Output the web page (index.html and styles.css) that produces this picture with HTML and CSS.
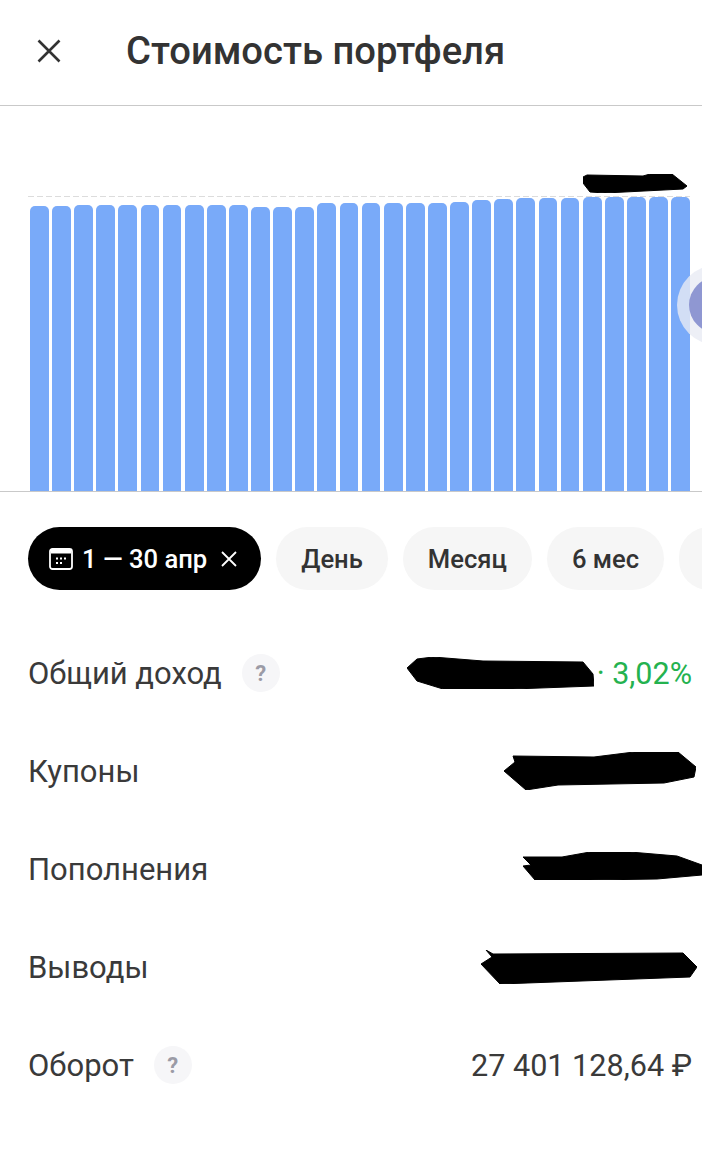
FILE: index.html
```html
<!DOCTYPE html>
<html lang="ru">
<head>
    <meta charset="UTF-8" />
    <meta name="viewport" content="width=device-width, initial-scale=1.0" />
    <title>Стоимость портфеля</title>
    <link rel="stylesheet" href="styles.css">
</head>
<body>
<header class="topbar">
    <svg class="close-icon" viewBox="0 0 24 24"><path d="M1.500 1.500L22.500 22.500M22.500 1.500L1.500 22.500"/></svg>
    <h1>Стоимость портфеля</h1>
</header>

<section class="chart">
    <svg class="scribble scribble-top" viewBox="0 0 104 19"><path d="M0 3L4 1L60 2L67 0L89 0L104 12L100 15L22 19L7 18L0 9Z"/></svg>
    <div class="chart-line"></div>
    <div class="bars">
        <div class="bar" style="height:285px"></div>
        <div class="bar" style="height:285px"></div>
        <div class="bar" style="height:286px"></div>
        <div class="bar" style="height:286px"></div>
        <div class="bar" style="height:286px"></div>
        <div class="bar" style="height:286px"></div>
        <div class="bar" style="height:286px"></div>
        <div class="bar" style="height:286px"></div>
        <div class="bar" style="height:286px"></div>
        <div class="bar" style="height:286px"></div>
        <div class="bar" style="height:284px"></div>
        <div class="bar" style="height:284px"></div>
        <div class="bar" style="height:284px"></div>
        <div class="bar" style="height:288px"></div>
        <div class="bar" style="height:288px"></div>
        <div class="bar" style="height:288px"></div>
        <div class="bar" style="height:288px"></div>
        <div class="bar" style="height:288px"></div>
        <div class="bar" style="height:288px"></div>
        <div class="bar" style="height:289px"></div>
        <div class="bar" style="height:291px"></div>
        <div class="bar" style="height:292px"></div>
        <div class="bar" style="height:293px"></div>
        <div class="bar" style="height:293px"></div>
        <div class="bar" style="height:293px"></div>
        <div class="bar" style="height:294px"></div>
        <div class="bar" style="height:294px"></div>
        <div class="bar" style="height:294px"></div>
        <div class="bar" style="height:294px"></div>
        <div class="bar" style="height:294px"></div>
    </div>
    <div class="thumb"></div>
</section>

<nav class="chips">
    <div class="chip chip-active">
        <svg class="cal-icon" viewBox="0 0 24 22">
            <rect x="1" y="1" width="22" height="20" rx="2.500" fill="none" stroke="#fff" stroke-width="1.800"/>
            <path d="M2 2H22V5.500H2Z" fill="#fff"/>
            <path d="M7 9.500h2v2H7zM11 9.500h2v2h-2zM15 9.500h2v2h-2zM7 14h2v2H7zM11 14h2v2h-2z" fill="#fff"/>
        </svg>
        <span>1 — 30 апр</span>
        <svg class="chip-close" viewBox="0 0 18 18"><path d="M2 2L16 16M16 2L2 16"/></svg>
    </div>
    <div class="chip">День</div>
    <div class="chip">Месяц</div>
    <div class="chip">6 мес</div>
    <div class="chip chip-cut"></div>
</nav>

<section class="rows">
    <div class="row">
        <div class="row-label">Общий доход <span class="help">?</span></div>
        <div class="row-value">
            <svg class="scribble scribble-income" viewBox="0 0 187 32"><path d="M0 11L10 2L26 0L76 4L176 5L186 17L187 29L106 32L36 32L10 24Z"/></svg>
            <span class="gain">· 3,02%</span>
        </div>
    </div>
    <div class="row">
        <div class="row-label">Купоны</div>
        <div class="row-value">
            <svg class="scribble scribble-coupons" viewBox="0 0 192 38"><path d="M0 19L11 10L9 4L90 5L130 0L174 0L192 15L190 25L160 31L54 33L22 38Z"/></svg>
        </div>
    </div>
    <div class="row">
        <div class="row-label">Пополнения</div>
        <div class="row-value">
            <svg class="scribble scribble-deposits" viewBox="0 0 179 28"><path d="M0 5L39 5L67 0L107 0L154 4L179 13L179 23L134 27L67 28L12 28L0 14L8 13Z"/></svg>
        </div>
    </div>
    <div class="row">
        <div class="row-label">Выводы</div>
        <div class="row-value">
            <svg class="scribble scribble-withdrawals" viewBox="0 0 216 34"><path d="M5 0L12 4L202 3L216 17L209 27L19 34L0 14L11 7Z"/></svg>
        </div>
    </div>
    <div class="row">
        <div class="row-label">Оборот <span class="help">?</span></div>
        <div class="row-value row-sum">27 401 128,64 ₽</div>
    </div>
</section>
</body>
</html>
```

FILE: styles.css
```css
html, body {
    margin: 0;
    padding: 0;
    background: #fff;
}
body {
    width: 702px;
    height: 1150px;
    overflow: hidden;
    font-family: Roboto, "Noto Sans", sans-serif;
    color: #333;
}
.topbar {
    display: flex;
    align-items: center;
    gap: 65px;
    height: 101px;
    padding: 0 0 4px 37px;
    border-bottom: 1px solid #c9c9c9;
}
.topbar h1 {
    margin: 0;
    font-size: 38.2px;
    font-weight: 500;
    color: #333;
}
.close-icon {
    width: 24px;
    height: 24px;
    fill: none;
    stroke: #333;
    stroke-width: 2.6;
}
.scribble {
    display: block;
    fill: #000;
    stroke: #000;
    stroke-width: 1;
    stroke-linejoin: round;
}
.chart {
    position: relative;
    height: 385px;
    border-bottom: 1px solid #c9c9c9;
    overflow: hidden;
    display: flex;
    align-items: flex-end;
    padding: 0 12px 0 30px;
}
.scribble-top {
    position: absolute;
    left: 583px;
    top: 68px;
    width: 104px;
    height: 19px;
}
.chart-line {
    position: absolute;
    left: 28px;
    right: 12px;
    top: 90px;
    height: 1px;
    background: repeating-linear-gradient(90deg, #dcdcdc 0 6px, transparent 6px 9px);
}
.bars {
    position: relative;
    flex: 1;
    display: grid;
    grid-template-columns: repeat(30, 1fr);
    gap: 3.4px;
    align-items: end;
}
.bar {
    background: #79aaf9;
    border-radius: 5px 5px 0 0;
}
.thumb {
    position: absolute;
    left: 689px;
    top: 171px;
    width: 56px;
    height: 56px;
    border-radius: 50%;
    background: #8f97d2;
    box-shadow: 0 0 0 12px rgba(232, 235, 244, 0.8);
}
.chips {
    display: flex;
    gap: 15px;
    padding: 35px 0 0 28px;
    overflow: hidden;
}
.chip {
    flex: none;
    display: flex;
    align-items: center;
    height: 63px;
    padding: 0 25px;
    border-radius: 32px;
    background: #f6f6f6;
    font-size: 25.6px;
    font-weight: 500;
    color: #333;
}
.chip-active {
    gap: 9px;
    padding: 0 23px 0 21px;
    background: #000;
    color: #fff;
}
.chip-cut {
    width: 60px;
    padding: 0;
}
.cal-icon {
    width: 24px;
    height: 22px;
}
.chip-close {
    width: 18px;
    height: 18px;
    margin-left: 4px;
    fill: none;
    stroke: #fff;
    stroke-width: 1.8;
}
.rows {
    display: flex;
    flex-direction: column;
    padding-top: 34px;
}
.row {
    display: flex;
    align-items: center;
    justify-content: space-between;
    height: 98px;
    padding: 0 10px 0 28px;
    font-size: 31px;
    color: #3a3a3a;
}
.row-label {
    display: flex;
    align-items: center;
    gap: 20px;
}
.row-value {
    display: flex;
    align-items: center;
    gap: 3px;
}
.row-sum {
    font-size: 30.6px;
}
.help {
    display: flex;
    align-items: center;
    justify-content: center;
    width: 38px;
    height: 38px;
    border-radius: 50%;
    background: #f6f6f8;
    font-size: 22px;
    font-weight: 700;
    color: #9b9ba6;
}
.gain {
    color: #24b24f;
    font-size: 30.5px;
}
.scribble-income {
    width: 187px;
    height: 32px;
}
.scribble-coupons {
    width: 192px;
    height: 38px;
    margin-right: -4px;
}
.scribble-deposits {
    width: 179px;
    height: 28px;
    margin: 0 -10px 6px 0;
}
.scribble-withdrawals {
    width: 216px;
    height: 34px;
    margin-right: -5px;
}
```
